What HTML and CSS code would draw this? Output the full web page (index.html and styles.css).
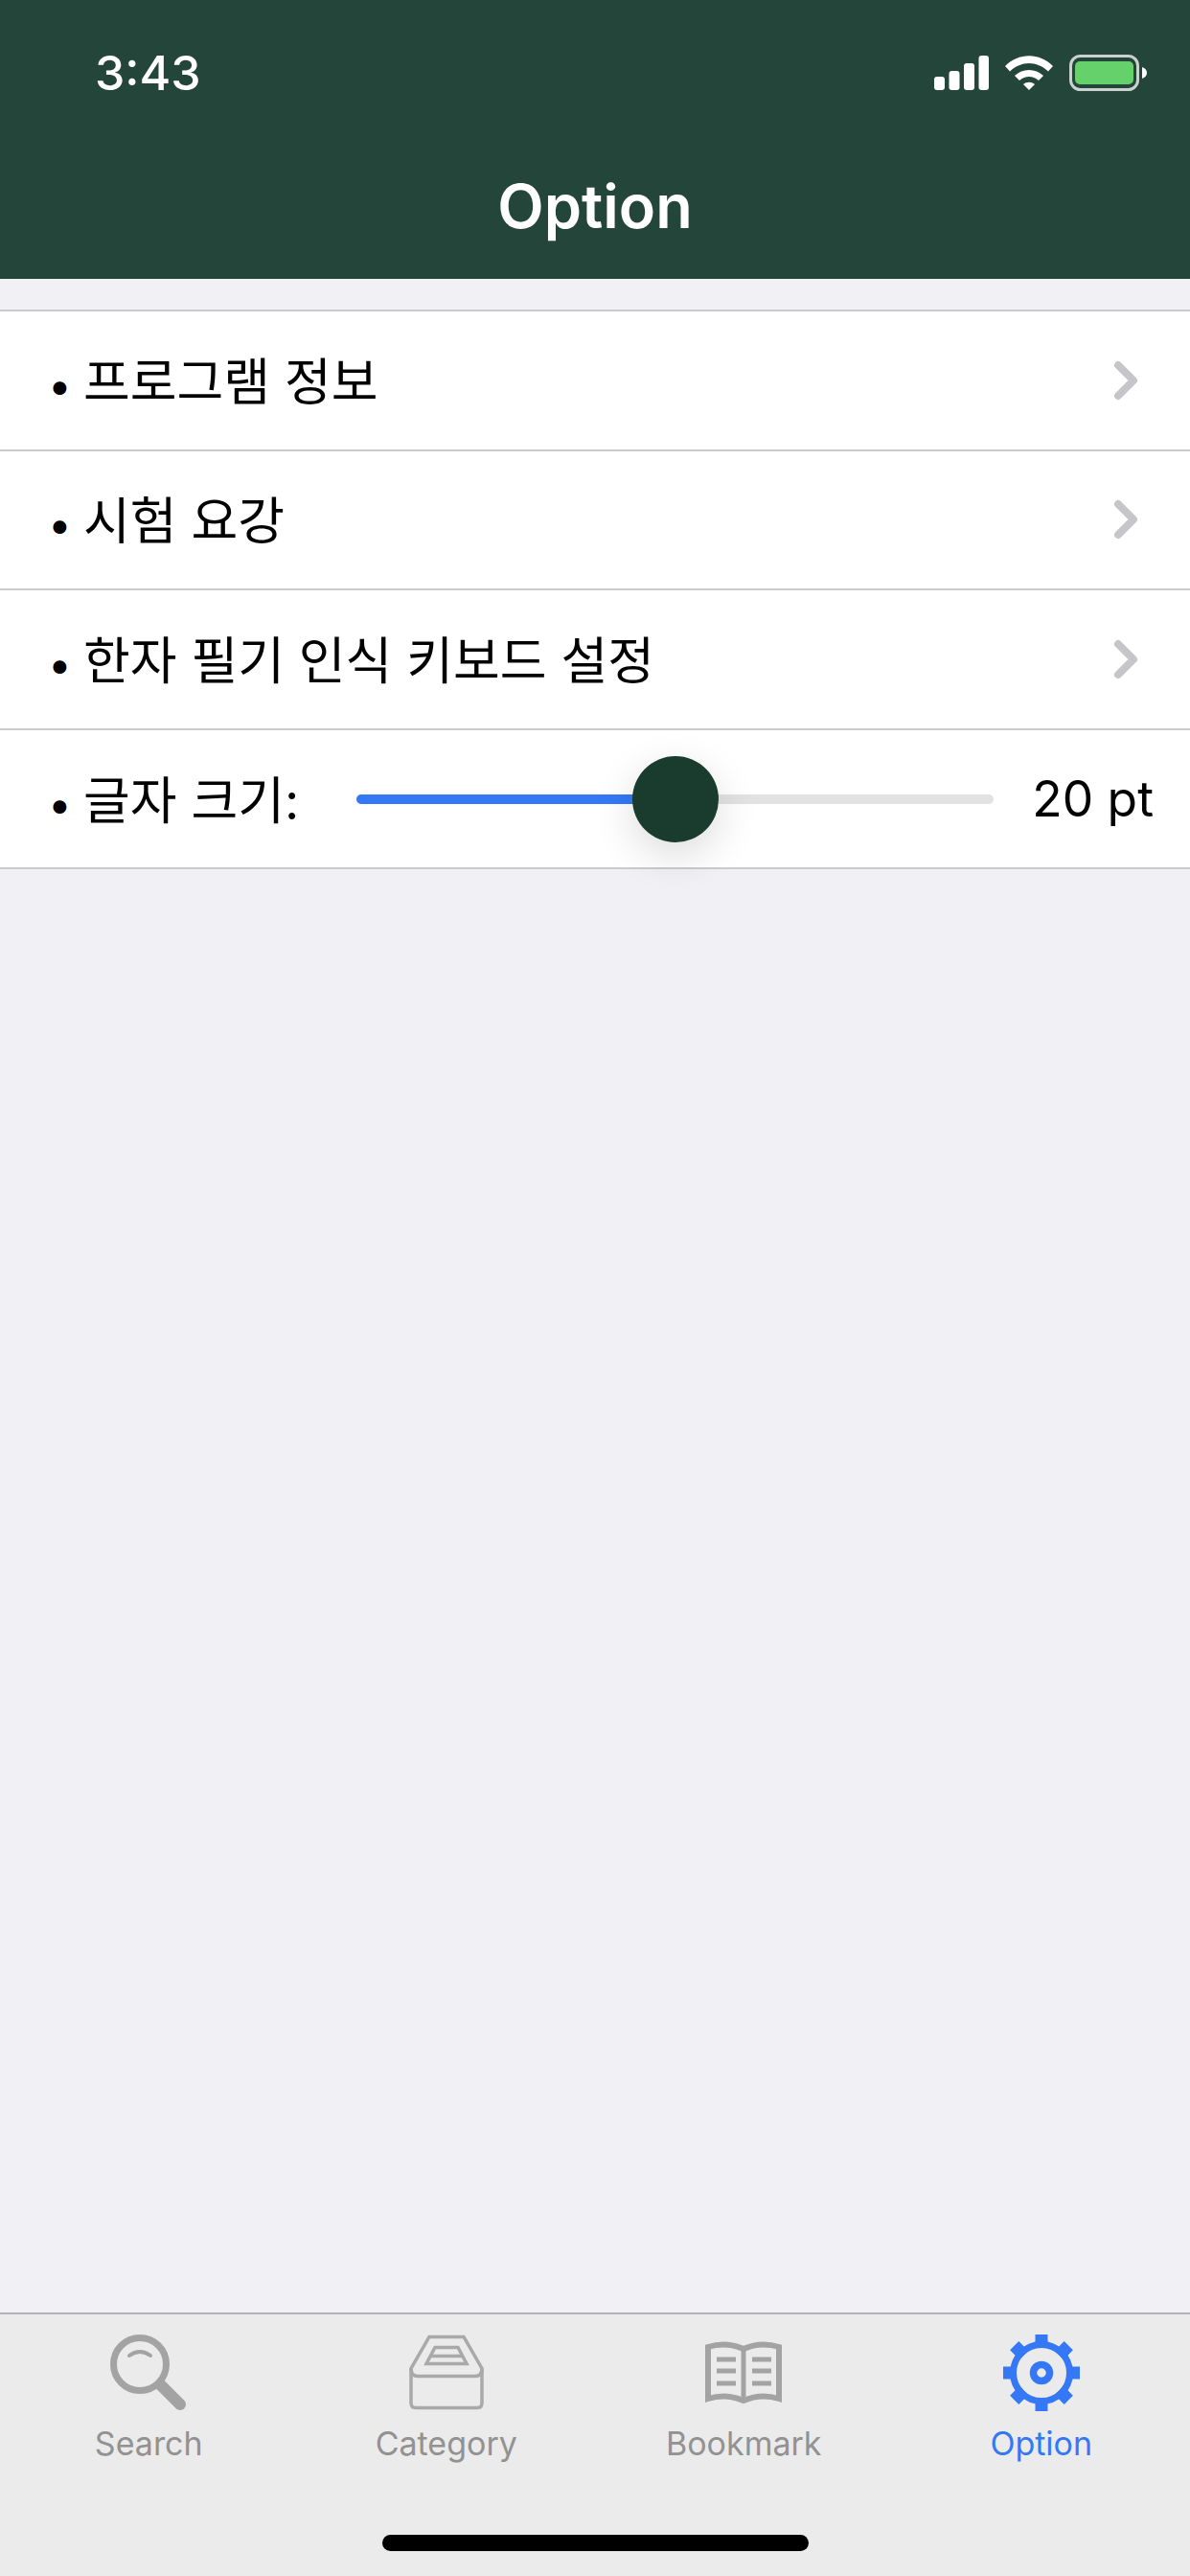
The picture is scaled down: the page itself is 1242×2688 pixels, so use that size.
FILE: index.html
```html
<!DOCTYPE html>
<html lang="ko">
<head>
<meta charset="UTF-8">
<meta name="viewport" content="width=device-width, initial-scale=1.0">
<title>Option</title>
<link rel="stylesheet" href="styles.css">
</head>
<body>
<header class="header">
  <div class="status-bar">
    <span class="time">3:43</span>
    <div class="status-icons">
      <svg class="signal" width="57" height="36" viewBox="0 0 57 36">
        <rect x="0" y="22" width="11" height="14" rx="3"/>
        <rect x="15.5" y="16" width="11" height="20" rx="3"/>
        <rect x="31" y="8" width="11" height="28" rx="3"/>
        <rect x="46.5" y="0" width="10.5" height="36" rx="3"/>
      </svg>
      <svg class="wifi" width="50" height="36" viewBox="0 0 50 36">
        <path d="M0 11 C14 -3.500 36 -3.500 50 11 L45 16.500 C33 5 17 5 5 16.500 Z"/>
        <path d="M10 21 C18 13 32 13 40 21 L35 26 C29 20.500 21 20.500 15 26 Z"/>
        <path d="M19 30 C22.500 27 27.500 27 31 30 L25 36 Z"/>
      </svg>
      <svg class="battery" width="81" height="38" viewBox="0 0 81 38">
        <rect x="1.500" y="1.500" width="70" height="35" rx="10" fill="none" stroke="#c9d2ce" stroke-width="3"/>
        <rect x="6" y="7" width="61" height="24" rx="5" fill="#65d16a"/>
        <path d="M76 13 C79 14 81 16 81 19 C81 22 79 24 76 25 Z" fill="#fff"/>
      </svg>
    </div>
  </div>
  <h1 class="title">Option</h1>
</header>

<main class="content">
  <div class="list">
    <div class="row">
      <span class="row-label"><span class="bullet">•</span>프로그램 정보</span>
      <svg class="chevron" width="28" height="42" viewBox="0 0 28 42"><path d="M5 5 L21 21 L5 37"/></svg>
    </div>
    <div class="row">
      <span class="row-label"><span class="bullet">•</span>시험 요강</span>
      <svg class="chevron" width="28" height="42" viewBox="0 0 28 42"><path d="M5 5 L21 21 L5 37"/></svg>
    </div>
    <div class="row">
      <span class="row-label"><span class="bullet">•</span>한자 필기 인식 키보드 설정</span>
      <svg class="chevron" width="28" height="42" viewBox="0 0 28 42"><path d="M5 5 L21 21 L5 37"/></svg>
    </div>
    <div class="row row-slider">
      <span class="row-label"><span class="bullet">•</span>글자 크기:</span>
      <div class="slider">
        <div class="slider-fill"></div>
        <div class="slider-thumb"></div>
      </div>
      <span class="slider-value">20 pt</span>
    </div>
  </div>
</main>

<nav class="tabbar">
  <div class="tabs">
    <div class="tab">
      <svg class="tab-icon" width="80" height="80" viewBox="0 0 80 80">
        <circle cx="31" cy="31" r="27.500" fill="none" stroke="#a3a3a3" stroke-width="7"/>
        <path d="M20 22 Q31 14 42 22" fill="none" stroke="#a3a3a3" stroke-width="4" stroke-linecap="round"/>
        <path d="M53 53 L73 73" fill="none" stroke="#a3a3a3" stroke-width="12" stroke-linecap="round"/>
      </svg>
      <span>Search</span>
    </div>
    <div class="tab">
      <svg class="tab-icon" width="80" height="80" viewBox="-2 -1.500 80 80" fill="none" stroke="#a9a9a9" stroke-width="3.500">
        <path d="M20 1 H56 L75 34 V70 Q75 75 70 75 H6 Q1 75 1 70 V34 Z"/>
        <path d="M1 34 Q1 42 8 42 H68 Q75 42 75 34"/>
        <path d="M26 12 H50 L59 29 H17 Z"/>
        <path d="M21 21 H55"/>
      </svg>
      <span>Category</span>
    </div>
    <div class="tab">
      <svg class="tab-icon" width="80" height="80" viewBox="0 -7 80 80" fill="none" stroke="#a3a3a3">
        <path d="M3 6 Q22 0 40 8 Q58 0 77 6 V60 Q58 54 40 62 Q22 54 3 60 Z" stroke-width="6"/>
        <path d="M40 8 V62" stroke-width="5"/>
        <path d="M12 19 H32 M12 31 H32 M12 44 H32 M49 19 H69 M49 31 H69 M49 44 H69" stroke-width="5"/>
      </svg>
      <span>Bookmark</span>
    </div>
    <div class="tab tab-active">
      <svg class="tab-icon" width="80" height="80" viewBox="0 0 80 80">
        <g fill="#3478f6">
          <rect x="33.500" y="0" width="13" height="14"/>
          <rect x="33.500" y="66" width="13" height="14"/>
          <rect x="0" y="33.500" width="14" height="13"/>
          <rect x="66" y="33.500" width="14" height="13"/>
          <rect x="33.500" y="0" width="13" height="14" transform="rotate(45 40 40)"/>
          <rect x="33.500" y="66" width="13" height="14" transform="rotate(45 40 40)"/>
          <rect x="0" y="33.500" width="14" height="13" transform="rotate(45 40 40)"/>
          <rect x="66" y="33.500" width="14" height="13" transform="rotate(45 40 40)"/>
        </g>
        <circle cx="40" cy="40" r="29.500" fill="none" stroke="#3478f6" stroke-width="7"/>
        <circle cx="40" cy="40" r="8.500" fill="none" stroke="#3478f6" stroke-width="7.500"/>
      </svg>
      <span>Option</span>
    </div>
  </div>
  <div class="home-indicator"></div>
</nav>
</body>
</html>
```

FILE: styles.css
```css
* {
  box-sizing: border-box;
}
html, body {
  height: 100%;
}
body {
  margin: 0;
  width: 1242px;
  height: 2688px;
  display: flex;
  flex-direction: column;
  background-color: #f0f0f5;
  color: #000;
  font-family: Inter, "Noto Sans CJK KR", sans-serif;
  overflow: hidden;
}

/* Header */
.header {
  height: 291px;
  background-color: #24453a;
  color: #fff;
}
.status-bar {
  height: 175px;
  padding: 57px 45px 0 99px;
  display: flex;
  justify-content: space-between;
  align-items: flex-start;
}
.time {
  font-size: 50px;
  font-weight: 500;
  line-height: 38px;
}
.status-icons {
  display: flex;
  align-items: flex-start;
  gap: 17px;
}
.signal, .wifi {
  fill: #fff;
  margin-top: 1px;
}
.title {
  margin: 0;
  text-align: center;
  font-size: 63px;
  font-weight: 600;
  line-height: 80px;
}

/* List */
.content {
  flex: 1;
  padding-top: 32px;
}
.list {
  background-color: #fff;
  border-top: 2px solid #cbcbcf;
}
.row {
  height: 145.6px;
  padding: 0 52px 4px 50px;
  display: flex;
  align-items: center;
  justify-content: space-between;
  border-bottom: 2px solid #cbcbcf;
}
.row-label {
  font-size: 53px;
}
.bullet {
  display: inline-block;
  width: 37px;
  font-size: 44px;
}
.chevron {
  fill: none;
  stroke: #c6c6ca;
  stroke-width: 8;
  stroke-linecap: round;
  stroke-linejoin: round;
  margin-top: 4px;
}
.row-slider {
  position: relative;
  z-index: 1;
  padding-right: 38px;
}
.slider {
  position: relative;
  width: 665px;
  height: 10px;
  margin: 5px 0 0 60px;
  border-radius: 5px;
  background-color: #e2e2e2;
}
.slider-fill {
  width: 50%;
  height: 100%;
  border-radius: 5px 0 0 5px;
  background-color: #3478f6;
}
.slider-thumb {
  position: absolute;
  left: 50%;
  top: 50%;
  width: 90px;
  height: 90px;
  margin: -45px 0 0 -45px;
  border-radius: 50%;
  background-color: #1a3c2e;
  box-shadow: 0 14px 44px rgba(0, 0, 0, 0.14);
}
.slider-value {
  font-size: 51.5px;
  margin: 3px 0 0 auto;
}

/* Tab bar */
.tabbar {
  height: 275px;
  background-color: #ebebeb;
  border-top: 2px solid #b4b4b8;
  position: relative;
}
.tabs {
  display: grid;
  grid-template-columns: repeat(4, 1fr);
  padding-top: 21px;
}
.tab {
  display: flex;
  flex-direction: column;
  align-items: center;
  font-size: 34px;
  color: #929292;
}
.tab span {
  margin-top: 10px;
  line-height: 48px;
}
.tab-active {
  color: #3478f6;
}
.home-indicator {
  position: absolute;
  left: 399px;
  top: 230px;
  width: 445px;
  height: 17px;
  border-radius: 9px;
  background-color: #000;
}
```
